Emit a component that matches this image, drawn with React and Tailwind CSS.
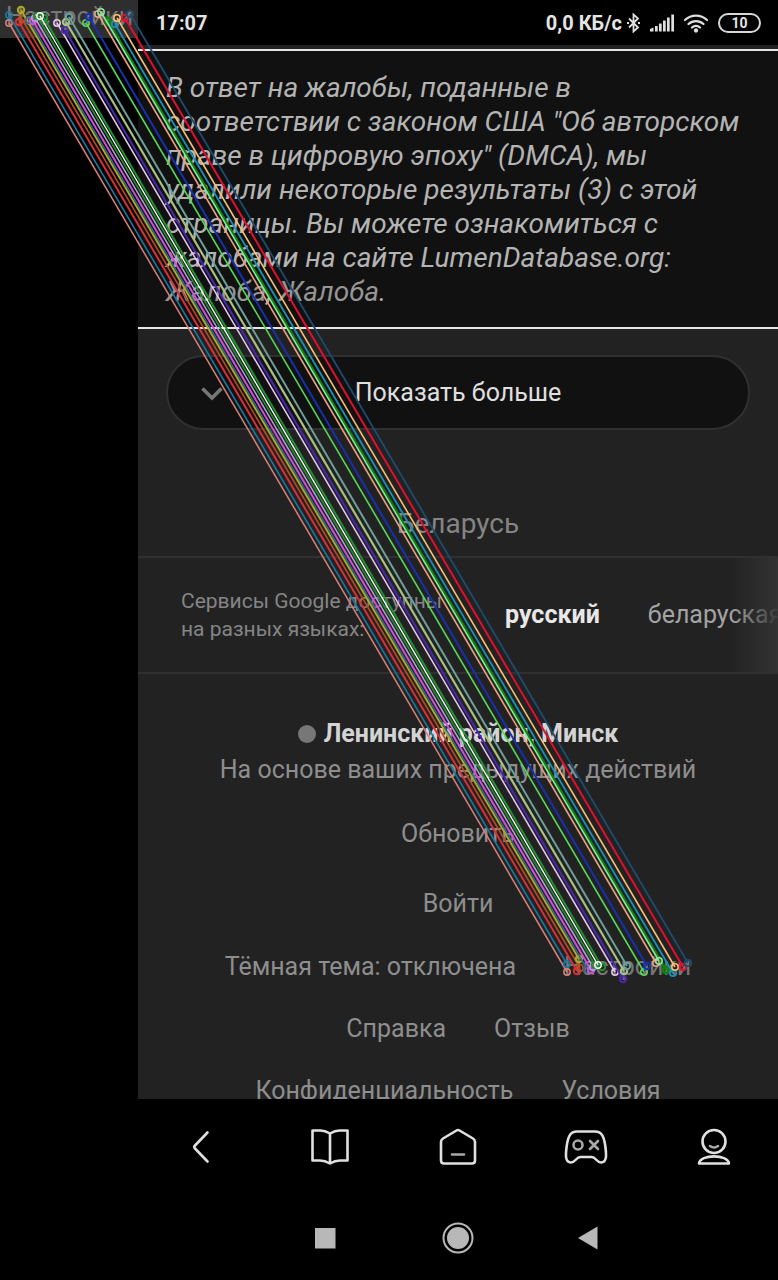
import React from "react";

const SHIFT_X = 558;
const SHIFT_Y = 949;

const matches = [
  [9, 23, "#d98078", 1.5],
  [9, 15, "#1878a0", 1.6],
  [19, 22, "#d83038", 2],
  [22, 19, "#c04a20", 1.6],
  [21, 10, "#b0a820", 2],
  [29, 20, "#2c6c88", 1.5],
  [33, 21, "#d050d8", 2],
  [35, 18, "#c098e8", 1.5],
  [37, 16, "#208828", 1.8],
  [44, 18, "#209030", 2],
  [40, 16, "#f0fff0", 1.4],
  [57, 23, "#ecc8f0", 1.5],
  [65, 30, "#4828b0", 2],
  [66, 22, "#a8c080", 2.2],
  [69, 17, "#6ca098", 2],
  [86, 23, "#58d858", 1.6],
  [89, 17, "#1830b0", 2],
  [98, 14, "#f0a080", 1.6],
  [108, 21, "#108010", 2.6],
  [101, 12, "#90e8a0", 1.5],
  [115, 24, "#1890b8", 1.8],
  [117, 18, "#f8c070", 1.6],
  [125, 18, "#e01030", 2],
  [130, 14, "#1c4c70", 1.8],
];

function MatchLines() {
  return (
    <svg
      className="pointer-events-none absolute top-0 left-0 h-[1000px] w-[760px]"
      viewBox="0 0 760 1000"
      fill="none"
      aria-hidden="true"
    >
      {matches.map(([x, y, color, width]) => (
        <g key={`${x}-${y}`} stroke={color} strokeWidth={width}>
          <line x1={x} y1={y} x2={x + SHIFT_X} y2={y + SHIFT_Y} />
          <circle cx={x} cy={y} r="3.2" />
          <circle cx={x + SHIFT_X} cy={y + SHIFT_Y} r="3.2" />
        </g>
      ))}
    </svg>
  );
}

function StatusBar() {
  return (
    <header className="flex h-[45px] shrink-0 items-center justify-between bg-black pr-[17px] pl-[18px] text-xl font-bold text-[#e4e4e4]">
      <span>17:07</span>
      <div className="flex items-center">
        <span>0,0 КБ/с</span>
        <svg className="ml-1 h-5 w-4" viewBox="0 0 16 20" fill="none" stroke="#e0e0e0" strokeWidth="1.8" aria-hidden="true">
          <path d="M3 5.5l9 9L7.500 18.500V1.500L12 5.500l-9 9" />
          <path d="M1 10h2M12 10h2" />
        </svg>
        <svg className="ml-2 h-5 w-6" viewBox="0 0 24 20" fill="#e0e0e0" aria-hidden="true">
          <path d="M0 18.500v-2.500l3.500-1.500v4zM5 13h2.700v5.500H5zM9 10.500h2.700v8H9zM13 7.500h2.700v11H13zM17 4.500h2.700v14H17zM21.300 1.500h2.700v17h-2.700z" />
        </svg>
        <svg className="ml-2 h-5 w-7" viewBox="0 0 28 20" fill="none" stroke="#e0e0e0" strokeWidth="2.300" strokeLinecap="round" aria-hidden="true">
          <path d="M3 7a16 16 0 0 1 22 0M6.500 11a11 11 0 0 1 15 0M10 14.500a6 6 0 0 1 8 0" />
          <circle cx="14" cy="17.500" r="1" fill="#e0e0e0" />
        </svg>
        <span className="ml-2 flex h-5 w-[43px] items-center justify-center rounded-full border-2 border-[#d8d8d8] text-sm">
          10
        </span>
      </div>
    </header>
  );
}

function Notice() {
  return (
    <section className="mt-1 border-y-2 border-[#e6e6e6] bg-[#111111] pt-5 pr-4 pb-[18px] pl-7 text-[28px] leading-[34px] text-[#b4b4b4] italic">
      <p>
        В ответ на жалобы, поданные в
        <br />
        соответствии с законом США "Об авторском
        <br />
        праве в цифровую эпоху" (DMCA), мы
        <br />
        удалили некоторые результаты (3) с этой
        <br />
        страницы. Вы можете ознакомиться с
        <br />
        жалобами на сайте LumenDatabase.org:
        <br />
        <a href="#1" className="text-[#969696]">Жалоба</a>,{" "}
        <a href="#2" className="text-[#969696]">Жалоба</a>.
      </p>
    </section>
  );
}

function Languages() {
  return (
    <div className="flex h-[118px] items-center overflow-hidden border-y-2 border-[#303030] pl-[43px]">
      <p className="w-[324px] shrink-0 text-[21px] leading-7 text-[#858585]">
        Сервисы Google доступны
        <br />
        на разных языках:
      </p>
      <div className="relative flex h-full flex-1 items-center gap-12 overflow-hidden text-[25px] whitespace-nowrap">
        <a href="#ru" className="font-bold text-[#e8e8e8]">русский</a>
        <a href="#be" className="text-[#a4a4a4]">беларуская</a>
        <div className="absolute inset-y-0 right-0 w-12 bg-linear-to-r from-[#22222200] to-[#343434f0]" />
      </div>
    </div>
  );
}

function Footer() {
  return (
    <footer className="flex flex-col items-center pt-[42px] text-[25px] text-[#8e8e8e]">
      <p className="flex h-9 items-center gap-2 font-bold text-[#d4d4d4]">
        <span className="size-[18px] rounded-full bg-[#777777]" />
        Ленинский район, Минск
      </p>
      <p className="h-[62px] leading-9">На основе ваших предыдущих действий</p>
      <a href="#update" className="h-[70px] leading-[40px]">Обновить</a>
      <a href="#login" className="h-[63px] leading-[40px]">Войти</a>
      <div className="flex h-[62px] gap-12 leading-[40px]">
        <a href="#theme">Тёмная тема: отключена</a>
        <a href="#settings" className="text-[#777777]">Настройки</a>
      </div>
      <div className="flex h-[62px] gap-12 leading-[40px]">
        <a href="#help">Справка</a>
        <a href="#feedback">Отзыв</a>
      </div>
      <div className="flex h-[62px] gap-12 leading-[40px]">
        <a href="#privacy">Конфиденциальность</a>
        <a href="#terms">Условия</a>
      </div>
    </footer>
  );
}

const iconClass = "size-12";

function Toolbar() {
  return (
    <nav className="grid h-[96px] shrink-0 grid-cols-5 place-items-center bg-black" aria-label="Браузер">
      <button aria-label="Назад">
        <svg className={iconClass} viewBox="0 0 48 48" fill="none" stroke="#e0e0e0" strokeWidth="2.600" strokeLinecap="round" strokeLinejoin="round">
          <path d="M29.500 9.500L17 22.500Q15.500 24 17 25.500L29.500 38.500" />
        </svg>
      </button>
      <button aria-label="Закладки">
        <svg className={iconClass} viewBox="0 0 48 48" fill="none" stroke="#e0e0e0" strokeWidth="2.600" strokeLinejoin="round">
          <path d="M24 10.500Q19 7.500 14.500 7.500H6.500V37.500H14Q19 37.500 24 40.500Q29 37.500 34 37.500H41.500V7.500H33.500Q29 7.500 24 10.500V40" />
        </svg>
      </button>
      <button aria-label="Домой">
        <svg className={iconClass} viewBox="0 0 48 48" fill="none" stroke="#e0e0e0" strokeWidth="2.600" strokeLinejoin="round" strokeLinecap="round">
          <path d="M22.500 7.500Q24 6.600 25.500 7.500L39 15.500Q41 16.800 41 19V37.500Q41 40.500 38 40.500H10Q7 40.500 7 37.500V19Q7 16.800 9 15.500Z" />
          <path d="M18 31.500h12" stroke="#a8a8a8" />
        </svg>
      </button>
      <button aria-label="Игры">
        <svg className={iconClass} viewBox="0 0 48 48" fill="none" stroke="#e0e0e0" strokeWidth="2.600" strokeLinejoin="round" strokeLinecap="round">
          <path d="M15 8.500H33C40 8.500 42 14 43.300 23C44.500 32 45 39.500 39 39.500C34.500 39.500 34 34 29.500 34H18.500C14 34 13.500 39.500 9 39.500C3 39.500 3.500 32 4.700 23C6 14 8 8.500 15 8.500Z" />
          <circle cx="16" cy="22" r="4.500" stroke="#a8a8a8" />
          <path d="M28 18l8 8m0-8l-8 8" stroke="#a8a8a8" />
        </svg>
      </button>
      <button aria-label="Профиль">
        <svg className={iconClass} viewBox="0 0 48 48" fill="none" stroke="#e0e0e0" strokeWidth="2.600" strokeLinejoin="round" strokeLinecap="round">
          <circle cx="24" cy="18.500" r="11.500" />
          <path d="M9 40.500C10 31 38 31 39 40.500Z" />
          <path d="M20 23q4 3 8 0" stroke="#a8a8a8" />
        </svg>
      </button>
    </nav>
  );
}

function SystemNav() {
  return (
    <nav className="flex h-[85px] shrink-0 items-center justify-center gap-[98px] bg-black" aria-label="Система">
      <button aria-label="Недавние" className="size-[34px]">
        <svg viewBox="0 0 34 34" fill="#b8b8b8"><path d="M6 7h20.500v20.500H6z" /></svg>
      </button>
      <button aria-label="Главный экран" className="size-[34px]">
        <svg viewBox="0 0 34 34" fill="none">
          <circle cx="17" cy="17" r="14.500" stroke="#b8b8b8" strokeWidth="2" />
          <circle cx="17" cy="17" r="11" fill="#b8b8b8" />
        </svg>
      </button>
      <button aria-label="Вернуться" className="size-[34px]">
        <svg viewBox="0 0 34 34" fill="#b8b8b8"><path d="M5 17L24.500 5.500V28.500z" /></svg>
      </button>
    </nav>
  );
}

export default function App() {
  return (
    <div className="relative flex h-screen overflow-hidden bg-black font-['Roboto','Noto_Sans',sans-serif]">
      <aside className="w-[138px] shrink-0">
        <div className="h-[38px] bg-[#2e2e2e] pl-[6px] text-[25px] leading-[34px] text-[#777777]">
          Настройки
        </div>
      </aside>
      <div className="flex min-w-0 flex-1 flex-col bg-[#222222]">
        <StatusBar />
        <main className="min-h-0 flex-1 overflow-hidden">
          <Notice />
          <div className="px-7 pt-[26px]">
            <button className="relative h-[75px] w-full rounded-full border-2 border-[#303030] bg-[#111111] text-[25px] text-[#e0e0e0]">
              <svg className="absolute top-6 left-8 size-6" viewBox="0 0 24 24" fill="none" stroke="#777777" strokeWidth="3.500" aria-hidden="true">
                <path d="M2.500 7.500L12 17l9.500-9.500" />
              </svg>
              Показать больше
            </button>
          </div>
          <h2 className="mt-[76px] h-[50px] text-center text-[28px] leading-9 text-[#858585]">Беларусь</h2>
          <Languages />
          <Footer />
        </main>
        <Toolbar />
        <SystemNav />
      </div>
      <MatchLines />
    </div>
  );
}
